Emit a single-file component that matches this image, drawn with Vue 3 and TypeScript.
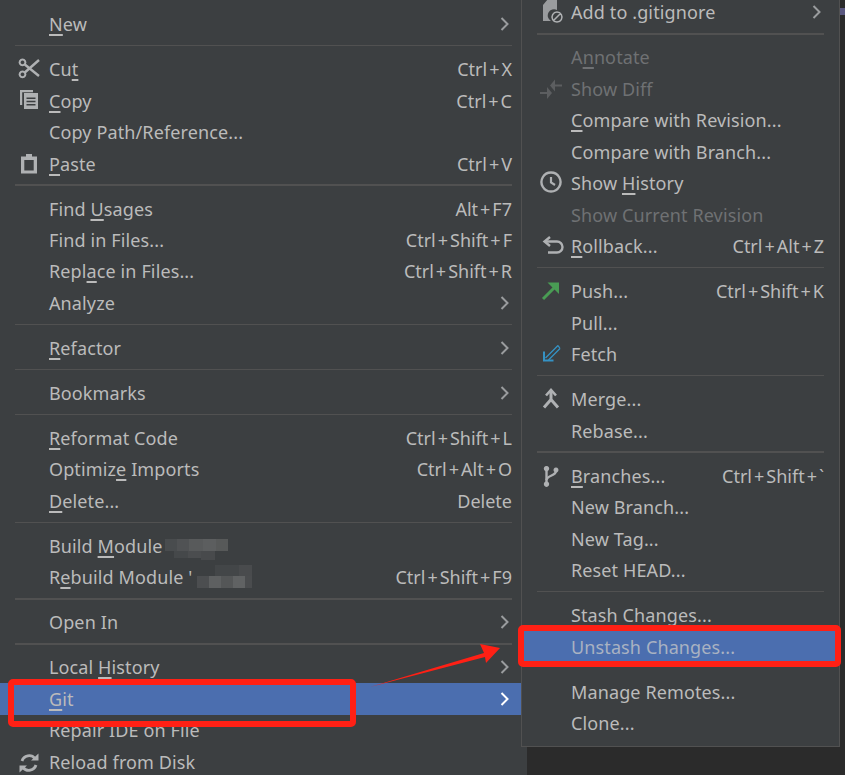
<script setup lang="ts">
type IconName = 'cut' | 'copy' | 'paste' | 'reload' | 'ignore' | 'diff' | 'clock' | 'rollback' | 'push' | 'fetch' | 'merge' | 'branch'
interface Row {
  label?: string
  u?: number
  keys?: string
  sub?: boolean
  icon?: IconName
  off?: boolean
  active?: boolean
  sep?: boolean
  hiddenSep?: boolean
}
const sep: Row = { sep: true }
const leftMenu: Row[] = [
  { label: 'New', u: 0, sub: true }, sep,
  { label: 'Cut', u: 2, keys: 'Ctrl+X', icon: 'cut' },
  { label: 'Copy', u: 0, keys: 'Ctrl+C', icon: 'copy' },
  { label: 'Copy Path/Reference...' },
  { label: 'Paste', u: 0, keys: 'Ctrl+V', icon: 'paste' }, sep,
  { label: 'Find Usages', u: 5, keys: 'Alt+F7' },
  { label: 'Find in Files...', keys: 'Ctrl+Shift+F' },
  { label: 'Replace in Files...', u: 4, keys: 'Ctrl+Shift+R' },
  { label: 'Analyze', sub: true }, sep,
  { label: 'Refactor', u: 0, sub: true }, sep,
  { label: 'Bookmarks', sub: true }, sep,
  { label: 'Reformat Code', u: 0, keys: 'Ctrl+Shift+L' },
  { label: 'Optimize Imports', u: 7, keys: 'Ctrl+Alt+O' },
  { label: 'Delete...', u: 0, keys: 'Delete' }, sep,
  { label: 'Build Module', u: 6 },
  { label: "Rebuild Module '", u: 1, keys: 'Ctrl+Shift+F9' }, sep,
  { label: 'Open In', sub: true }, sep,
  { label: 'Local History', u: 6, sub: true },
  { label: 'Git', u: 0, sub: true, active: true },
  { label: 'Repair IDE on File' },
  { label: 'Reload from Disk', icon: 'reload' },
]
const gitMenu: Row[] = [
  { label: 'Add to .gitignore', sub: true, icon: 'ignore' }, sep,
  { label: 'Annotate', u: 1, off: true },
  { label: 'Show Diff', off: true, icon: 'diff' },
  { label: 'Compare with Revision...', u: 0 },
  { label: 'Compare with Branch...' },
  { label: 'Show History', u: 5, icon: 'clock' },
  { label: 'Show Current Revision', off: true },
  { label: 'Rollback...', u: 0, keys: 'Ctrl+Alt+Z', icon: 'rollback' }, sep,
  { label: 'Push...', keys: 'Ctrl+Shift+K', icon: 'push' },
  { label: 'Pull...' },
  { label: 'Fetch', icon: 'fetch' }, sep,
  { label: 'Merge...', icon: 'merge' },
  { label: 'Rebase...' }, sep,
  { label: 'Branches...', u: 0, keys: 'Ctrl+Shift+`', icon: 'branch' },
  { label: 'New Branch...' },
  { label: 'New Tag...' },
  { label: 'Reset HEAD...' }, sep,
  { label: 'Stash Changes...' },
  { label: 'Unstash Changes...', active: true },
  { sep: true, hiddenSep: true },
  { label: 'Manage Remotes...' },
  { label: 'Clone...' },
]
interface Shape { d: string; fill?: string; stroke?: string; w?: number; rule?: 'evenodd' }
const G = '#afb1b3'
const D = '#5c5e60'
const icons: Record<IconName, Shape[]> = {
  cut: [
    { d: 'M4.500 0.500a2.900 2.900 0 1 1-.01 0ZM4.500 12.500a2.900 2.900 0 1 1-.01 0Z', stroke: G, w: 2 },
    { d: 'M6.800 5.500 21 17M6.800 13.500 21 1', stroke: G, w: 2.400 },
  ],
  copy: [
    { d: 'M2 -1h13v2.200H4.200V14H2Z', fill: G },
    { d: 'M6 2h14v16H6ZM8.500 6.500v1.600h9V6.500ZM8.500 9.700v1.600h9V9.700ZM8.500 12.900v1.600h9v-1.600Z', fill: G, rule: 'evenodd' },
  ],
  paste: [
    { d: 'M3 2.500h5V0h6v2.500h5v17H3ZM6.300 6v10.500h9.400V6Z', fill: G, rule: 'evenodd' },
  ],
  reload: [
    { d: 'M4 9A7.500 7.500 0 0 1 17 6.500', stroke: G, w: 2.800 },
    { d: 'M13 8.500h7.500V1.500Z', fill: G },
    { d: 'M18 13A7.500 7.500 0 0 1 5 15.500', stroke: G, w: 2.800 },
    { d: 'M9 13.500H1.500V20.500Z', fill: G },
  ],
  ignore: [
    { d: 'M3 3 8 -3h9v11a6 6 0 0 0-6 11H3Z', fill: '#9a9c9e' },
    { d: 'M17 10a5 5 0 1 1-.01 0ZM13.500 18.500l7-7', stroke: G, w: 1.500 },
  ],
  diff: [
    { d: 'M14 5.500h8v2h-8Z', fill: D },
    { d: 'M15 0.500v12L10 6.500Z', fill: D },
    { d: 'M0 13h8v2H0Z', fill: D },
    { d: 'M7 8v12l5-6Z', fill: D },
  ],
  clock: [
    { d: 'M11 -0.500a9.500 9.500 0 1 1-.01 0Z', stroke: G, w: 2.400 },
    { d: 'M11 4V9.500L15 12', stroke: G, w: 2.200 },
  ],
  rollback: [
    { d: 'M5 5.500h12a5.500 5.500 0 0 1 0 11H8', stroke: G, w: 2.400 },
    { d: 'M10 1 4.500 5.500 10 10', stroke: G, w: 2.400 },
  ],
  push: [
    { d: 'M3 18 15 6', stroke: '#499c54', w: 3 },
    { d: 'M7.500 1.500H19V13Z', fill: '#499c54' },
  ],
  fetch: [
    { d: 'M4 7.500V16.500H13.500', stroke: '#3592c4', w: 2 },
    { d: 'M5.500 14 18 1.500M8.500 16 20 4.500M18 1.500 20 4.500', stroke: '#3592c4', w: 1.300 },
  ],
  merge: [
    { d: 'M6 6.500 11 1 16 6.500', stroke: G, w: 2.600 },
    { d: 'M11 2V10.500M11 10.500 4 18.500M11 10.500 18 18.500', stroke: G, w: 3 },
  ],
  branch: [
    { d: 'M6.500 3V18', stroke: G, w: 2.400 },
    { d: 'M16 5C16 10 6.500 9.500 6.500 14', stroke: G, w: 2.400 },
    { d: 'M6.500 0a2.700 2.700 0 1 1-.01 0ZM6.500 15.500a2.700 2.700 0 1 1-.01 0ZM16 1.500a2.500 2.500 0 1 1-.01 0Z', fill: G },
  ],
}
function parts(r: Row): [string, string, string] {
  const t = r.label ?? ''
  if (r.u === undefined) return [t, '', '']
  return [t.slice(0, r.u), t.charAt(r.u), t.slice(r.u + 1)]
}
interface Cell { x: number; y: number; w: number; h: number; c: string }
const mosaic: Cell[] = [
  { x: 165, y: 539, w: 12, h: 12, c: '#494c4e' },
  { x: 177, y: 539, w: 12, h: 12, c: '#505254' },
  { x: 189, y: 539, w: 14, h: 12, c: '#585a5b' },
  { x: 203, y: 539, w: 13, h: 12, c: '#5c5e5f' },
  { x: 216, y: 539, w: 12, h: 12, c: '#575959' },
  { x: 174, y: 551, w: 14, h: 7, c: '#45484a' },
  { x: 188, y: 551, w: 13, h: 7, c: '#4b4d4f' },
  { x: 201, y: 551, w: 14, h: 9, c: '#484a4c' },
  { x: 215, y: 565, w: 24, h: 11, c: '#434648' },
  { x: 239, y: 565, w: 13, h: 11, c: '#494b4d' },
  { x: 197, y: 576, w: 12, h: 12, c: '#4c4e50' },
  { x: 209, y: 576, w: 12, h: 12, c: '#5e6061' },
  { x: 221, y: 576, w: 12, h: 12, c: '#545657' },
  { x: 233, y: 576, w: 12, h: 12, c: '#606263' },
  { x: 245, y: 576, w: 7, h: 12, c: '#4a4c4e' },
]
const menus = [
  { key: 'left', cls: 'menu-left', rows: leftMenu },
  { key: 'git', cls: 'menu-git', rows: gitMenu },
]
function cellStyle(c: Cell) {
  return { left: c.x + 'px', top: c.y + 'px', width: c.w + 'px', height: c.h + 'px', background: c.c }
}
</script>

<template>
  <div class="page">
    <div v-for="m in menus" :key="m.key" class="menu" :class="m.cls">
      <template v-for="(r, i) in m.rows" :key="i">
        <div v-if="r.sep" class="sep" :class="{ hidden: r.hiddenSep }"><span class="line"></span></div>
        <div v-else class="row" :class="{ off: r.off, active: r.active }">
          <span class="slot">
            <svg v-if="r.icon" class="icon" viewBox="0 0 20 20" width="20" height="20">
              <path
                v-for="(s, k) in icons[r.icon]"
                :key="k"
                :d="s.d"
                :fill="s.fill ?? 'none'"
                :stroke="s.stroke ?? 'none'"
                :stroke-width="s.w ?? 0"
                :fill-rule="s.rule ?? 'nonzero'"
              />
            </svg>
          </span>
          <span class="label">{{ parts(r)[0] }}<span class="mn">{{ parts(r)[1] }}</span>{{ parts(r)[2] }}</span>
          <span v-if="r.keys" class="keys">
            <template v-for="(k, n) in r.keys.split('+')" :key="n"><span v-if="n > 0" class="plus">+</span>{{ k }}</template>
          </span>
          <svg v-if="r.sub" class="chev" viewBox="0 0 9 14" width="9" height="14">
            <path d="M1.500 1 7.500 7 1.500 13" fill="none" stroke="currentColor" stroke-width="2" />
          </svg>
        </div>
      </template>
    </div>

    <div v-for="(c, i) in mosaic" :key="'m' + i" class="cell" :style="cellStyle(c)"></div>

    <div class="edge-mark"></div>
    <div class="mark mark-git"></div>
    <div class="mark mark-unstash"></div>
    <svg class="arrow" viewBox="0 0 845 775" width="845" height="775">
      <path d="M370 687 484 653 480 644 500 648 486 663 485 657Z" fill="#ff2015" />
    </svg>
  </div>
</template>

<style scoped>
.page {
  position: relative;
  width: 845px;
  height: 775px;
  overflow: hidden;
  background: #2b2b2b;
  font-family: "Noto Sans", "Open Sans", sans-serif;
  font-size: 18px;
  color: #bbbbbb;
}
.menu {
  background: #3c3f41;
  box-sizing: border-box;
}
.menu-left {
  width: 527px;
  height: 775px;
  padding: 8.5px 0 0 0;
  --pad-l: 18px;
  --pad-r: 15px;
  --sep-l: 15px;
  --sep-h: 13.6px;
}
.menu-git {
  position: absolute;
  left: 521px;
  top: -4.5px;
  width: 319px;
  height: 751px;
  border: 1px solid #515151;
  --pad-l: 18px;
  --pad-r: 15px;
  --sep-l: 15px;
  --sep-h: 13.7px;
  z-index: 1;
}
.row {
  display: flex;
  align-items: center;
  height: 31.45px;
  padding: 0 var(--pad-r) 0 var(--pad-l);
  white-space: nowrap;
}
.row.off { color: #6f7173; }
.row.active { background: #4b6eaf; }
.menu-git .row.active { color: #a9b2c2; }
.slot {
  flex: 0 0 20px;
  width: 20px;
  height: 20px;
  margin-right: 11px;
}
.icon {
  display: block;
  overflow: visible;
}
.label {
  flex: 1 1 auto;
  letter-spacing: 0.12px;
}
.mn {
  text-decoration: underline;
  text-decoration-thickness: 1.5px;
  text-underline-offset: 3px;
  text-decoration-skip-ink: none;
}
.keys { flex: 0 0 auto; }
.plus { margin: 0 2px; }
.chev {
  flex: 0 0 9px;
  margin-right: 3px;
  color: #9a9c9e;
}
.row.active .chev { color: #ffffff; }
.sep {
  display: flex;
  align-items: center;
  height: var(--sep-h);
  padding: 0 var(--pad-r) 2px var(--sep-l);
  box-sizing: border-box;
}
.line {
  display: block;
  flex: 1;
  height: 1.5px;
  background: #515151;
}
.sep.hidden .line { background: transparent; }
.cell {
  position: absolute;
  z-index: 2;
}
.edge-mark {
  position: absolute;
  left: 840px;
  top: 8px;
  width: 5px;
  height: 7px;
  background: #5a5880;
}
.mark {
  position: absolute;
  box-sizing: border-box;
  border: 6px solid #ff2015;
  border-radius: 5px;
  z-index: 3;
}
.mark-git {
  left: 8px;
  top: 679px;
  width: 348px;
  height: 48px;
}
.mark-unstash {
  left: 518px;
  top: 625px;
  width: 323px;
  height: 42px;
}
.arrow {
  position: absolute;
  left: 0;
  top: 0;
  z-index: 3;
  pointer-events: none;
}
</style>
